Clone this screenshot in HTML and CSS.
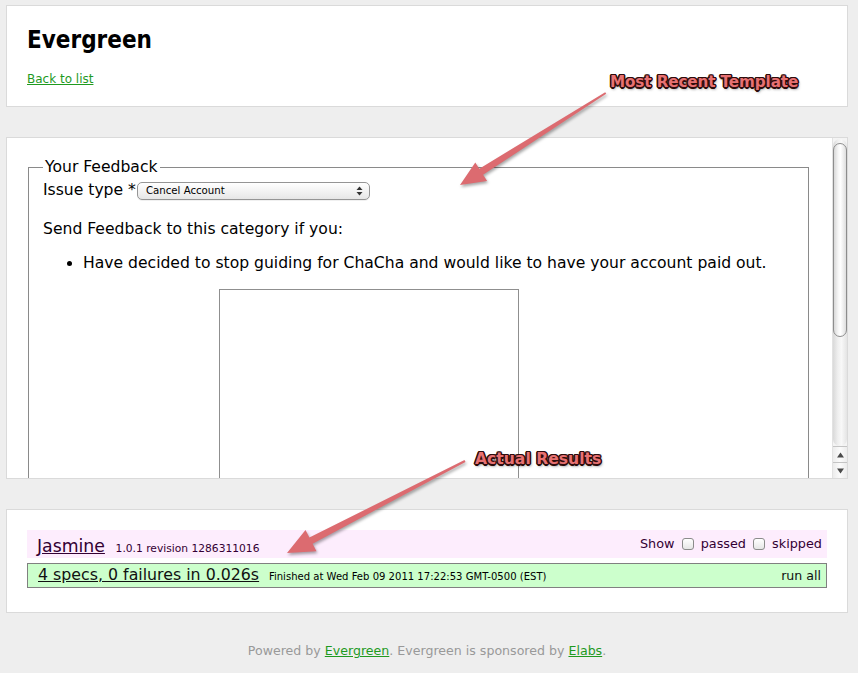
FILE: index.html
```html
<!DOCTYPE html>
<html>
<head>
<meta charset="utf-8">
<title>Evergreen</title>
<link rel="stylesheet" href="styles.css">
</head>
<body>
<div class="page">
  <div class="card card-head">
    <h1 class="title">Evergreen</h1>
    <a class="back" href="#">Back to list</a>
  </div>

  <div class="card card-frame">
    <div class="frame">
      <fieldset class="feedback">
        <legend class="legend">Your Feedback</legend>
        <div class="issue-row">Issue type *<span class="select"><span class="select-text">Cancel Account</span><svg class="select-arrows" width="7" height="10" viewBox="0 0 7 10"><polygon points="0.5,4 3.5,0.5 6.5,4" fill="#333"/><polygon points="0.5,6 3.5,9.5 6.5,6" fill="#333"/></svg></span></div>
        <p class="send">Send Feedback to this category if you:</p>
        <ul class="reasons">
          <li>Have decided to stop guiding for ChaCha and would like to have your account paid out.</li>
        </ul>
        <div class="textarea"></div>
      </fieldset>
    </div>
    <div class="scrollbar">
      <div class="track"><div class="thumb"></div></div>
      <div class="sb-btn"><svg width="7" height="6" viewBox="0 0 7 6"><polygon points="0,5.5 3.5,0.5 7,5.5" fill="#4a4a4a"/></svg></div>
      <div class="sb-btn"><svg width="7" height="6" viewBox="0 0 7 6"><polygon points="0,0.5 3.5,5.5 7,0.5" fill="#4a4a4a"/></svg></div>
    </div>
  </div>

  <div class="card card-results">
    <div class="banner">
      <div class="logo"><a class="logo-link" href="#">Jasmine</a><span class="version">1.0.1 revision 1286311016</span></div>
      <div class="options">Show <span class="check"></span> passed <span class="check"></span> skipped</div>
    </div>
    <div class="runner">
      <div class="runner-desc"><a class="runner-link" href="#">4 specs, 0 failures in 0.026s</a><span class="finished">Finished at Wed Feb 09 2011 17:22:53 GMT-0500 (EST)</span></div>
      <a class="run-all" href="#">run all</a>
    </div>
  </div>

  <div class="footer">Powered by <a href="#">Evergreen</a>. Evergreen is sponsored by <a href="#">Elabs</a>.</div>
</div>

<div class="annotations">
  <svg class="arrows" width="858" height="673" viewBox="0 0 858 673">
    <polygon points="605.2,92.2 479.3,168.7 475.3,162.4 460,185 487.1,181 483.1,174.7 606.2,93.8" />
    <polygon points="464.5,460.1 309.4,537.5 305.5,529.9 287,553 316.5,551.3 312.6,543.7 465.5,461.9" />
  </svg>
  <div class="note note-template">Most Recent Template</div>
  <div class="note note-results">Actual Results</div>
</div>
</body>
</html>
```

FILE: styles.css
```css
* { box-sizing: border-box; }
html, body { margin: 0; padding: 0; }
body {
  background: #eeeeee;
  font-family: "DejaVu Sans", sans-serif;
  color: #000;
  position: relative;
  width: 858px;
  height: 673px;
  overflow: hidden;
}
.page { padding: 5px 10px 0 6px; }

.card {
  background: #fff;
  border: 1px solid #dadada;
  margin-bottom: 30px;
}

/* header card */
.card-head { height: 102px; padding: 19px 20px 0; }
.title {
  margin: 0 0 13px;
  font-family: "DejaVu Sans Condensed", "DejaVu Sans", sans-serif;
  font-stretch: condensed;
  font-size: 24px;
  line-height: 30px;
  font-weight: bold;
}
.back {
  display: inline-block;
  font-size: 12px;
  line-height: 15px;
  color: #1f9a1f;
}

/* framed template */
.card-frame { display: flex; height: 342px; }
.frame { flex: 1; overflow: hidden; font-size: 15.6px; min-width: 0; }
.feedback {
  margin: 20px 23px 0 21px;
  border: 1px solid #8a8a8a;
  padding: 1px 14px 0;
  min-width: 0;
}
.legend { padding: 0 2px; margin-left: 0; line-height: 18px; }
.issue-row { line-height: 26px; }
.select {
  display: inline-flex;
  align-items: center;
  justify-content: space-between;
  vertical-align: middle;
  margin-left: 1px;
  margin-top: 1px;
  width: 233px;
  height: 18px;
  padding: 0 6px 0 8px;
  border: 1px solid #959595;
  border-radius: 5px;
  background: linear-gradient(#ffffff, #f3f3f3 50%, #e6e6e6);
  box-shadow: 0 1px 0 rgba(0,0,0,0.06);
}
.select-text { font-size: 10.2px; line-height: 12px; }
.select-arrows { display: block; }
.send { margin: 16px 0 0; line-height: 20px; }
.reasons { margin: 14px 0 0; padding-left: 40px; line-height: 20px; }
.textarea {
  margin: 16px 0 0 176px;
  width: 300px;
  height: 260px;
  border: 1px solid #8f8f8f;
}

/* scrollbar */
.scrollbar {
  width: 15px;
  display: flex;
  flex-direction: column;
  background: #f4f4f4;
  border-left: 1px solid #e2e2e2;
}
.track {
  flex: 1;
  margin: 1px 0 0;
  padding: 4px 0 0;
  border-radius: 7px;
  background: linear-gradient(to right, #d9d9d9, #efefef 35%, #f8f8f8 60%, #e4e4e4);
}
.thumb {
  height: 194px;
  border: 1px solid #8d8d8d;
  border-radius: 7px;
  background: linear-gradient(to right, #d8d8d8, #f6f6f6 35%, #ffffff 55%, #dedede);
}
.sb-btn {
  height: 16px;
  display: flex;
  align-items: center;
  justify-content: center;
  border-top: 1px solid #c4c4c4;
  background: linear-gradient(to right, #ececec, #fbfbfb 50%, #ececec);
}

/* jasmine results */
.card-results { padding: 20px 20px 19px; }
.banner {
  height: 28px;
  padding: 6px 5px 0;
  background: #fdedfd;
  color: #330033;
  display: flex;
  justify-content: space-between;
  align-items: flex-start;
}
.logo { padding-left: 5px; font-size: 17.3px; line-height: 20px; }
.logo-link { color: #330033; }
.version { font-size: 10.7px; padding-left: 10.7px; }
.options { font-size: 12.8px; line-height: 15px; }
.check {
  display: inline-block;
  width: 12px;
  height: 12px;
  margin: 0 3px;
  vertical-align: -2px;
  border: 1px solid #8b8b8b;
  border-radius: 3px;
  background: linear-gradient(#ffffff, #e6e6e6);
}
.runner {
  margin: 5px 0;
  height: 25px;
  padding: 1px 5px 0 10px;
  border: 1px solid #808080;
  background: #ccffcc;
  display: flex;
  justify-content: space-between;
  align-items: baseline;
}
.runner-desc { font-size: 15.8px; line-height: 19px; }
.runner-link { color: #111; }
.finished { font-size: 10.05px; padding-left: 9.8px; }
.run-all { font-size: 12.6px; color: #111; text-decoration: none; }

/* footer */
.footer {
  text-align: center;
  font-size: 12.6px;
  line-height: 16px;
  color: #999999;
}
.footer a { color: #1f9a1f; }

/* screenshot annotations (overlay) */
.annotations {
  position: absolute;
  left: 0;
  top: 0;
  width: 858px;
  height: 673px;
  pointer-events: none;
}
.arrows { position: absolute; left: 0; top: 0; }
.arrows polygon {
  fill: #dc6b70;
  filter: drop-shadow(1px 2px 1.5px rgba(0,0,0,0.35));
}
.note {
  position: absolute;
  font-family: "DejaVu Sans", sans-serif;
  font-weight: bold;
  color: #e77172;
  white-space: nowrap;
  text-shadow:
    1.5px 0 0 #2d0c0c, -1.5px 0 0 #2d0c0c, 0 1.5px 0 #2d0c0c, 0 -1.5px 0 #2d0c0c,
    1px 1px 0 #2d0c0c, -1px -1px 0 #2d0c0c, 1px -1px 0 #2d0c0c, -1px 1px 0 #2d0c0c,
    1px 2px 3px rgba(0,0,0,0.6);
}
.note-template { left: 610px; top: 74px; font-size: 15.2px; line-height: 17px; letter-spacing: -0.1px; }
.note-results { left: 475px; top: 450px; font-size: 15.6px; line-height: 18px; }
```
